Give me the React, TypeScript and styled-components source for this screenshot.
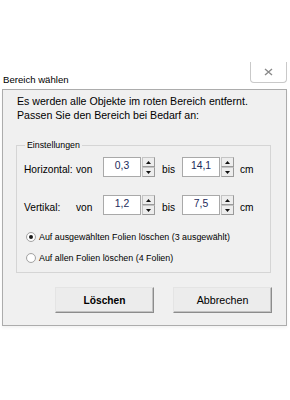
import styled, { createGlobalStyle } from 'styled-components';

const GlobalStyle = createGlobalStyle`
  html, body {
    margin: 0;
    padding: 0;
    background: #ffffff;
  }
  body {
    font-family: "Liberation Sans", Arial, sans-serif;
    color: #1a1a1a;
  }
`;

const Window = styled.div`
  width: 290px;
  height: 400px;
  padding-top: 62px;
  box-sizing: border-box;
`;

const TitleBar = styled.div`
  height: 27px;
  display: flex;
  justify-content: space-between;
  align-items: flex-start;
  padding: 0 3px 0 3px;
`;

const Title = styled.div`
  font-size: 9.6px;
  line-height: 12px;
  margin-top: 12px;
  color: #000;
`;

const CloseButton = styled.div`
  width: 35px;
  height: 20px;
  border: 1px solid #c9c9c9;
  border-top: none;
  border-radius: 0 0 4px 4px;
  background: #fff;
  display: flex;
  align-items: center;
  justify-content: center;
`;

const Panel = styled.div`
  margin: 0 3px 0 2px;
  height: 237px;
  box-sizing: border-box;
  border: 1px solid #acacac;
  background: #f0f0f0;
  padding-top: 4px;
  box-shadow: 0 2px 3px rgba(0, 0, 0, 0.05);
`;

const Intro = styled.p`
  margin: 0 0 0 14px;
  font-size: 10.6px;
  line-height: 14px;
  color: #000;
`;

const Group = styled.fieldset`
  margin: 17px 15px 0 13px;
  padding: 0;
  border: 1px solid #d5d5d5;
  min-width: 0;
`;

const Legend = styled.legend`
  margin-left: 8px;
  padding: 0 2px;
  font-size: 8.8px;
  line-height: 12px;
  color: #000;
`;

const GroupBody = styled.div`
  padding: 6px 0 7px 7px;
  display: flex;
  flex-direction: column;
`;

const RangeRow = styled.div<{ $gap?: number }>`
  display: grid;
  grid-template-columns: 52px 27px 52px 27px 52px auto;
  align-items: center;
  height: 20px;
  margin-top: ${(p) => p.$gap ?? 0}px;
`;

const RowLabel = styled.span<{ $pad?: number }>`
  font-size: 10.2px;
  padding-top: 4px;
  padding-left: ${(p) => p.$pad ?? 0}px;
  color: #000;
  white-space: nowrap;
`;

const Field = styled.div`
  display: flex;
  gap: 1px;
  height: 20px;
`;

const NumberBox = styled.div`
  width: 38px;
  box-sizing: border-box;
  border: 1px solid #a9a9a9;
  background: #fff;
  font-size: 10.4px;
  color: #1d2c5c;
  display: flex;
  align-items: center;
  justify-content: center;
  padding-bottom: 3px;
`;

const Spinner = styled.div`
  width: 13px;
  display: flex;
  flex-direction: column;
`;

const SpinButton = styled.div`
  flex: 1;
  box-sizing: border-box;
  border: 1px solid #c4c4c4;
  border-right-color: #9a9a9a;
  border-bottom-color: #9a9a9a;
  background: #ededed;
  display: flex;
  align-items: center;
  justify-content: center;
`;

const OptionRow = styled.label<{ $gap: number }>`
  display: flex;
  align-items: center;
  gap: 3px;
  margin-top: ${(p) => p.$gap}px;
  height: 14px;
  font-size: 8.9px;
  color: #000;
`;

const Radio = styled.span<{ $checked?: boolean }>`
  width: 10px;
  height: 10px;
  margin-left: 2px;
  box-sizing: border-box;
  border-radius: 50%;
  border: 1px solid #a4a4a4;
  background: radial-gradient(circle, #ffffff 55%, #e6e6e6 100%);
  display: flex;
  align-items: center;
  justify-content: center;

  &::after {
    content: '';
    width: 4px;
    height: 4px;
    border-radius: 50%;
    background: ${(p) => (p.$checked ? '#1a1a1a' : 'transparent')};
  }
`;

const ButtonRow = styled.div`
  display: flex;
  justify-content: flex-end;
  gap: 19px;
  margin: 14px 14px 0 0;
`;

const Button = styled.button<{ $primary?: boolean }>`
  width: 99px;
  height: 26px;
  box-sizing: border-box;
  border: 1px solid;
  border-color: #e4e4e4 #8c8c8c #8c8c8c #e4e4e4;
  box-shadow: inset -1px -1px 0 #c2c2c2;
  background: #ececec;
  font-family: "Liberation Sans", Arial, sans-serif;
  font-size: ${(p) => (p.$primary ? '10.2px' : '10.7px')};
  font-weight: ${(p) => (p.$primary ? 700 : 400)};
  color: #000;
  padding: 0;
`;

const Arrow = ({ up }: { up?: boolean }) => (
  <svg width="5" height="3" viewBox="0 0 5 3">
    <path d={up ? 'M0 3 L2.5 0 L5 3 Z' : 'M0 0 L2.5 3 L5 0 Z'} fill="#111" />
  </svg>
);

const NumberField = ({ value }: { value: string }) => (
  <Field>
    <NumberBox>{value}</NumberBox>
    <Spinner>
      <SpinButton>
        <Arrow up />
      </SpinButton>
      <SpinButton>
        <Arrow />
      </SpinButton>
    </Spinner>
  </Field>
);

export default function App() {
  return (
    <Window>
      <GlobalStyle />
      <TitleBar>
        <Title>Bereich wählen</Title>
        <CloseButton>
          <svg width="9" height="8" viewBox="0 0 9 8">
            <path d="M1 1 L8 7 M8 1 L1 7" stroke="#8a8a8a" strokeWidth="1.4" fill="none" />
          </svg>
        </CloseButton>
      </TitleBar>
      <Panel>
        <Intro>
          Es werden alle Objekte im roten Bereich entfernt.
          <br />
          Passen Sie den Bereich bei Bedarf an:
        </Intro>
        <Group>
          <Legend>Einstellungen</Legend>
          <GroupBody>
            <RangeRow>
              <RowLabel>Horizontal:</RowLabel>
              <RowLabel>von</RowLabel>
              <NumberField value="0,3" />
              <RowLabel $pad={7}>bis</RowLabel>
              <NumberField value="14,1" />
              <RowLabel $pad={6}>cm</RowLabel>
            </RangeRow>
            <RangeRow $gap={18}>
              <RowLabel>Vertikal:</RowLabel>
              <RowLabel>von</RowLabel>
              <NumberField value="1,2" />
              <RowLabel $pad={7}>bis</RowLabel>
              <NumberField value="7,5" />
              <RowLabel $pad={6}>cm</RowLabel>
            </RangeRow>
            <OptionRow $gap={15}>
              <Radio $checked />
              Auf ausgewählten Folien löschen (3 ausgewählt)
            </OptionRow>
            <OptionRow $gap={7}>
              <Radio />
              Auf allen Folien löschen (4 Folien)
            </OptionRow>
          </GroupBody>
        </Group>
        <ButtonRow>
          <Button $primary>Löschen</Button>
          <Button>Abbrechen</Button>
        </ButtonRow>
      </Panel>
    </Window>
  );
}
